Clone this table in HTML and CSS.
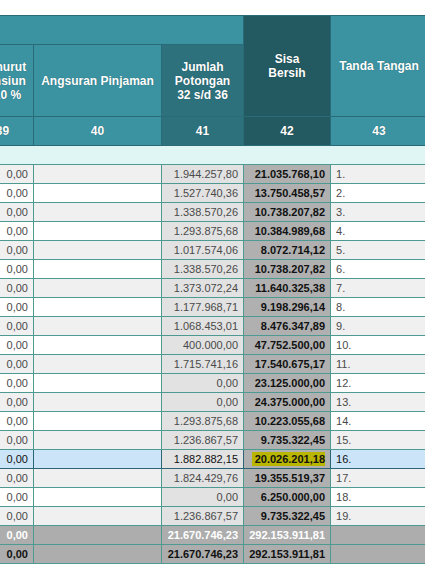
FILE: index.html
```html
<!DOCTYPE html>
<html lang="id">
<head>
<meta charset="utf-8">
<title>Daftar Potongan</title>
<link rel="stylesheet" href="styles.css">
</head>
<body>
<div class="viewport">
  <table class="grid">
    <colgroup>
      <col class="c39"><col class="c40"><col class="c41"><col class="c42"><col class="c43">
    </colgroup>
    <thead>
      <tr class="h1">
        <th colspan="3" class="group"></th>
        <th rowspan="2" class="sisa">Sisa<br>Bersih</th>
        <th rowspan="2">Tanda Tangan</th>
      </tr>
      <tr class="h2">
        <th>Menurut<br>Pensiun<br><span class="shift">10 %</span></th>
        <th>Angsuran Pinjaman</th>
        <th class="jml">Jumlah<br>Potongan<br>32 s/d 36</th>
      </tr>
      <tr class="h3">
        <th>39</th>
        <th>40</th>
        <th class="jml">41</th>
        <th class="sisa">42</th>
        <th>43</th>
      </tr>
      <tr class="spacer"><td colspan="5"></td></tr>
    </thead>
    <tbody>
      <tr class="odd"><td class="num">0,00</td><td></td><td class="num tot">1.944.257,80</td><td class="num net">21.035.768,10</td><td class="no">1.</td></tr>
      <tr><td class="num">0,00</td><td></td><td class="num tot">1.527.740,36</td><td class="num net">13.750.458,57</td><td class="no">2.</td></tr>
      <tr class="odd"><td class="num">0,00</td><td></td><td class="num tot">1.338.570,26</td><td class="num net">10.738.207,82</td><td class="no">3.</td></tr>
      <tr><td class="num">0,00</td><td></td><td class="num tot">1.293.875,68</td><td class="num net">10.384.989,68</td><td class="no">4.</td></tr>
      <tr class="odd"><td class="num">0,00</td><td></td><td class="num tot">1.017.574,06</td><td class="num net">8.072.714,12</td><td class="no">5.</td></tr>
      <tr><td class="num">0,00</td><td></td><td class="num tot">1.338.570,26</td><td class="num net">10.738.207,82</td><td class="no">6.</td></tr>
      <tr class="odd"><td class="num">0,00</td><td></td><td class="num tot">1.373.072,24</td><td class="num net">11.640.325,38</td><td class="no">7.</td></tr>
      <tr><td class="num">0,00</td><td></td><td class="num tot">1.177.968,71</td><td class="num net">9.198.296,14</td><td class="no">8.</td></tr>
      <tr class="odd"><td class="num">0,00</td><td></td><td class="num tot">1.068.453,01</td><td class="num net">8.476.347,89</td><td class="no">9.</td></tr>
      <tr><td class="num">0,00</td><td></td><td class="num tot">400.000,00</td><td class="num net">47.752.500,00</td><td class="no">10.</td></tr>
      <tr class="odd"><td class="num">0,00</td><td></td><td class="num tot">1.715.741,16</td><td class="num net">17.540.675,17</td><td class="no">11.</td></tr>
      <tr><td class="num">0,00</td><td></td><td class="num tot">0,00</td><td class="num net">23.125.000,00</td><td class="no">12.</td></tr>
      <tr class="odd"><td class="num">0,00</td><td></td><td class="num tot">0,00</td><td class="num net">24.375.000,00</td><td class="no">13.</td></tr>
      <tr><td class="num">0,00</td><td></td><td class="num tot">1.293.875,68</td><td class="num net">10.223.055,68</td><td class="no">14.</td></tr>
      <tr class="odd"><td class="num">0,00</td><td></td><td class="num tot">1.236.867,57</td><td class="num net">9.735.322,45</td><td class="no">15.</td></tr>
      <tr class="sel"><td class="num">0,00</td><td></td><td class="num tot">1.882.882,15</td><td class="num net"><span class="mark">20.026.201,18</span></td><td class="no">16.</td></tr>
      <tr class="odd"><td class="num">0,00</td><td></td><td class="num tot">1.824.429,76</td><td class="num net">19.355.519,37</td><td class="no">17.</td></tr>
      <tr><td class="num">0,00</td><td></td><td class="num tot">0,00</td><td class="num net">6.250.000,00</td><td class="no">18.</td></tr>
      <tr class="odd"><td class="num">0,00</td><td></td><td class="num tot">1.236.867,57</td><td class="num net">9.735.322,45</td><td class="no">19.</td></tr>
    </tbody>
    <tfoot>
      <tr class="sum light"><td class="num">0,00</td><td></td><td class="num">21.670.746,23</td><td class="num">292.153.911,81</td><td></td></tr>
      <tr class="sum"><td class="num">0,00</td><td></td><td class="num">21.670.746,23</td><td class="num">292.153.911,81</td><td></td></tr>
    </tfoot>
  </table>
</div>
</body>
</html>
```

FILE: styles.css
```css
html, body {
  margin: 0;
  padding: 0;
  background: #ffffff;
}

.viewport {
  width: 425px;
  height: 588px;
  overflow: hidden;
  padding-top: 15px;
  box-sizing: border-box;
}

.grid {
  margin-left: -29px;
  border-collapse: collapse;
  table-layout: fixed;
  width: 456px;
  font-family: "Liberation Sans", Arial, sans-serif;
}

.c39 { width: 62px; }
.c40 { width: 128px; }
.c41 { width: 82px; }
.c42 { width: 87px; }
.c43 { width: 97px; }

.grid th {
  background: #3b92a1;
  color: #ffffff;
  font-size: 12px;
  font-weight: bold;
  line-height: 14px;
  text-align: center;
  vertical-align: middle;
  border: 1px solid #296b76;
  padding: 0 2px;
  text-shadow: 0 0 1px rgba(0, 0, 0, 0.35);
}

.grid th.jml { background: #2d717d; }
.grid th.sisa { background: #235961; }

.h1 th { height: 28px; }
.h2 th { height: 71px; }
.h3 th { height: 28px; }

.shift { padding-left: 10px; }

.spacer td {
  height: 18px;
  padding: 0;
  background: #e0f6f4;
  border: none;
}

.grid tbody td,
.grid tfoot td {
  height: 18px;
  padding: 0 5px;
  border: 1px solid #4c9a92;
  font-size: 11px;
  color: #4a4a4a;
  background: #ffffff;
  white-space: nowrap;
  vertical-align: middle;
}

.grid tbody tr.odd td { background: #f0f0f0; }
.grid tbody tr td.tot { background: #e2e2e2; }
.grid tbody tr td.net {
  background: #b0b0b0;
  color: #111111;
  font-weight: bold;
}

.num { text-align: right; }
.no { text-align: left; }

.grid tbody tr.sel td {
  background: #cce4f8;
  color: #111111;
  border-color: #2d6476;
}
.grid tbody tr.sel td.tot { background: #e2e2e2; }
.grid tbody tr.sel td.net { background: #b0b0b0; }

.mark {
  background: #b8b600;
  padding: 1px 0 1px 3px;
}

.grid tfoot td {
  background: #adadad;
  color: #111111;
  font-weight: bold;
}
.grid tfoot tr.light td { color: #ffffff; }
```
